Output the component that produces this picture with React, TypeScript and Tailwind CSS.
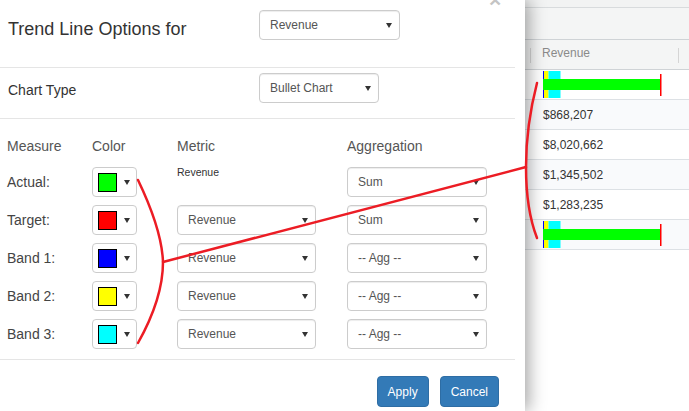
import React from 'react';

const font = { fontFamily: '"Liberation Sans", Arial, sans-serif' };

function Caret() {
  return (
    <svg width="6" height="5" viewBox="0 0 6 5" className="shrink-0">
      <polygon points="0,0 6,0 3,5" fill="#333" />
    </svg>
  );
}

function Select({ value, className }: { value: string; className: string }) {
  return (
    <div
      className={`relative h-[30px] border border-[#ccc] rounded-[4px] bg-white flex items-center pl-[10px] text-[12px] text-[#555] shadow-[inset_0_1px_1px_rgba(0,0,0,0.075)] ${className}`}
    >
      <span>{value}</span>
      <span className="absolute right-[7px] top-[12px] flex">
        <Caret />
      </span>
    </div>
  );
}

function ColorPicker({ color }: { color: string }) {
  return (
    <div className="w-[45px] h-[30px] border border-[#ccc] rounded-[4px] flex items-center pl-[5px] gap-[7px]">
      <div className="w-[19px] h-[19px] border border-black" style={{ backgroundColor: color }} />
      <Caret />
    </div>
  );
}

const measures = [
  { label: 'Actual:', color: '#00ff00', metric: null, agg: 'Sum' },
  { label: 'Target:', color: '#ff0000', metric: 'Revenue', agg: 'Sum' },
  { label: 'Band 1:', color: '#0000ff', metric: 'Revenue', agg: '-- Agg --' },
  { label: 'Band 2:', color: '#ffff00', metric: 'Revenue', agg: '-- Agg --' },
  { label: 'Band 3:', color: '#00ffff', metric: 'Revenue', agg: '-- Agg --' },
];

function Bullet() {
  return (
    <svg width="120" height="27" viewBox="0 0 120 27">
      <rect x="0" y="0" width="1" height="27" fill="#0000ff" />
      <rect x="1" y="0" width="4.5" height="27" fill="#ffff00" />
      <rect x="5.5" y="0" width="12" height="27" fill="#00ffff" />
      <rect x="0" y="8" width="117" height="11" fill="#00ff00" />
      <rect x="117" y="3" width="1.5" height="22" fill="#ff0000" />
    </svg>
  );
}

const gridRows: (string | null)[] = [null, '$868,207', '$8,020,662', '$1,345,502', '$1,283,235', null];

export default function App() {
  return (
    <div className="relative w-[689px] h-[411px] overflow-hidden flex bg-white" style={font}>
      {/* modal */}
      <div className="relative z-10 w-[525px] h-full shrink-0 bg-white shadow-[4px_0_16px_rgba(0,0,0,0.35)]">
        <span className="absolute left-[489px] top-[-11px] text-[21px] font-bold leading-none text-[#c4c4c4]">×</span>

        <div className="mr-[10px] h-[68px] border-b border-[#e5e5e5] flex items-start pt-[10px] pl-[8px]">
          <div className="w-[251px] mt-[4px] h-[30px] leading-[30px] text-[18px] text-[#333]">Trend Line Options for</div>
          <Select value="Revenue" className="w-[141px]" />
        </div>

        <div className="mr-[10px] h-[51px] border-b border-[#e5e5e5] flex items-start pt-[5px] pl-[8px]">
          <div className="w-[251px] mt-[2px] h-[30px] leading-[30px] text-[14px] text-[#333]">Chart Type</div>
          <Select value="Bullet Chart" className="w-[120px]" />
        </div>

        <div className="mr-[10px] pt-[17px] pb-[10px] pl-[7px] border-b border-[#e5e5e5]">
          <div className="grid grid-cols-[85px_85px_170px_140px] h-[20px] leading-[20px] text-[14px] text-[#555]">
            <div>Measure</div>
            <div>Color</div>
            <div>Metric</div>
            <div>Aggregation</div>
          </div>
          <div className="mt-[11px] flex flex-col gap-[8px]">
            {measures.map((m) => (
              <div key={m.label} className="grid grid-cols-[85px_85px_170px_140px] h-[30px] items-center">
                <div className="text-[14px] text-[#444]">{m.label}</div>
                <ColorPicker color={m.color} />
                {m.metric ? (
                  <Select value={m.metric} className="w-[139px]" />
                ) : (
                  <div className="self-start -mt-px leading-[12px] text-[10.5px] text-[#333]">Revenue</div>
                )}
                <Select value={m.agg} className="w-[140px]" />
              </div>
            ))}
          </div>
        </div>

        <div className="flex justify-end gap-[11px] pt-[16px] pr-[26px]">
          <button className="h-[31px] px-[10px] rounded-[4px] bg-[#337ab7] border border-[#2e6da4] text-white text-[12px]">Apply</button>
          <button className="h-[31px] px-[10px] rounded-[4px] bg-[#337ab7] border border-[#2e6da4] text-white text-[12px]">Cancel</button>
        </div>
      </div>

      {/* grid behind */}
      <div className="flex-1 flex flex-col bg-white">
        <div className="h-[8px] border-b border-[#d8dbdd] bg-[#f2f3f3]" />
        <div className="h-[32px] border-b border-[#cfd3d6] bg-[#f4f5f5]" />
        <div className="h-[30px] border-b border-[#cfd3d6] bg-[#f4f5f5] flex items-start pt-[8px]">
          <div className="w-[6px] h-[15px] border-r border-[#d5d5d5]" />
          <div className="w-[148px] h-[15px] pl-[11px] border-r border-[#d5d5d5] text-[12px] leading-[10px] text-[#8a8a8a]">Revenue</div>
        </div>
        {gridRows.map((v, i) => (
          <div
            key={i}
            className={`h-[30px] border-b border-[#dde1e5] flex items-center pl-[18px] ${i % 2 === 1 ? 'bg-[#f9fafc]' : 'bg-white'}`}
          >
            {v ? <span className="text-[12px] text-[#333]">{v}</span> : <Bullet />}
          </div>
        ))}
      </div>

      {/* annotation strokes */}
      <svg className="absolute inset-0 z-20 pointer-events-none" width="689" height="411" viewBox="0 0 689 411">
        <g fill="none" stroke="#ec1c24" strokeWidth="2.5" strokeLinecap="round">
          <path d="M138,180 C150,205 162,235 163,262 C163,290 152,318 138,343" />
          <path d="M163,262 L526,167" />
          <path d="M537,83 C530,110 526,140 526,167 C526,195 530,220 537,238" />
        </g>
      </svg>
    </div>
  );
}
